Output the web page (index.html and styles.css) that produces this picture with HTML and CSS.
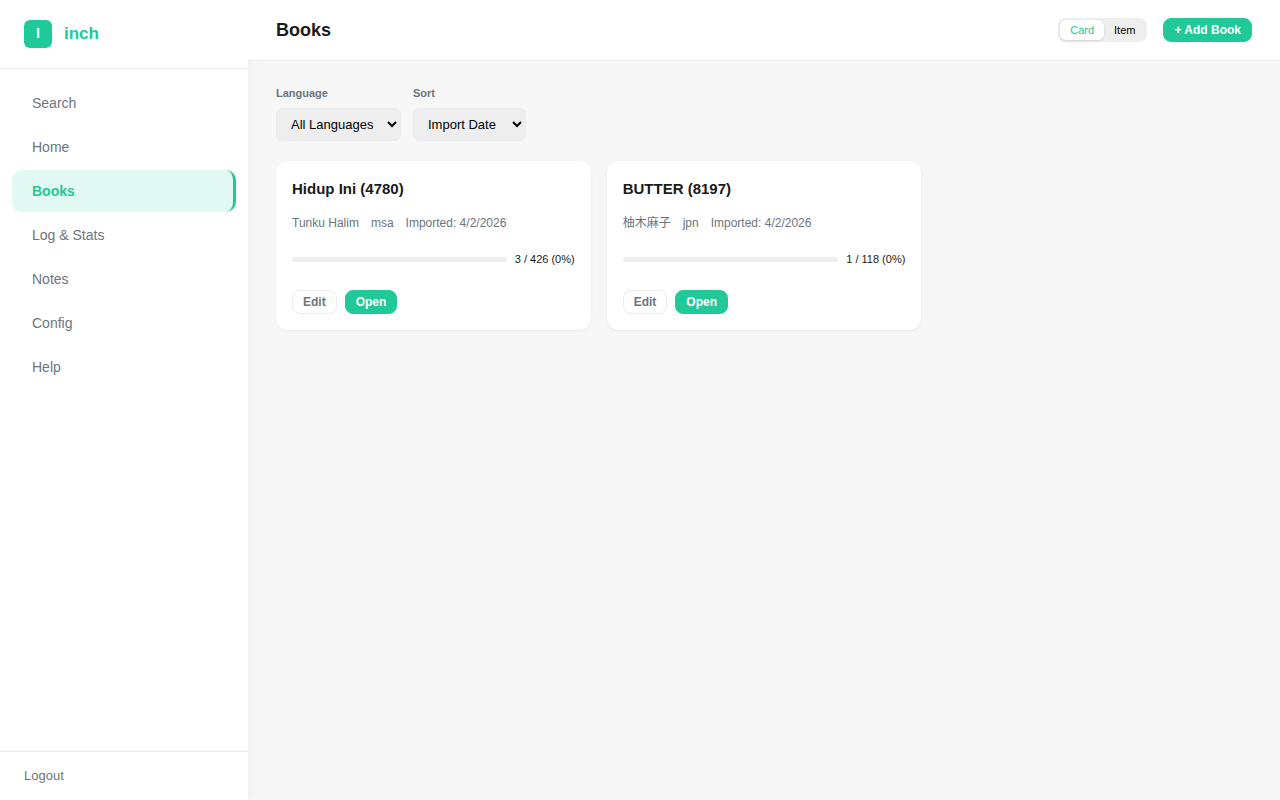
FILE: index.html
```html
<!DOCTYPE html>
<html lang="en">
<head>
    <meta charset="UTF-8">
    <meta name="viewport" content="width=device-width, initial-scale=1.0">
    <title>Books - inch</title>
    <link rel="stylesheet" href="styles.css">
</head>
<body>
    <aside class="sidebar">
        <div class="brand">
            <span class="brand-icon">I</span>
            <span class="brand-name">inch</span>
        </div>
        <nav class="nav">
            <a href="#search" class="nav-item">Search</a>
            <a href="#home" class="nav-item">Home</a>
            <a href="#books" class="nav-item active">Books</a>
            <a href="#stats" class="nav-item">Log &amp; Stats</a>
            <a href="#notes" class="nav-item">Notes</a>
            <a href="#config" class="nav-item">Config</a>
            <a href="#help" class="nav-item">Help</a>
        </nav>
        <div class="sidebar-footer">
            <a href="#logout" class="logout">Logout</a>
        </div>
    </aside>

    <main class="main">
        <header class="topbar">
            <h1>Books</h1>
            <div class="topbar-actions">
                <div class="toggle">
                    <button type="button" class="toggle-btn active">Card</button>
                    <button type="button" class="toggle-btn">Item</button>
                </div>
                <button type="button" class="btn btn-primary">+ Add Book</button>
            </div>
        </header>

        <div class="content">
            <div class="filters">
                <div class="filter">
                    <label for="language">Language</label>
                    <select id="language">
                        <option>All Languages</option>
                    </select>
                </div>
                <div class="filter">
                    <label for="sort">Sort</label>
                    <select id="sort">
                        <option>Import Date</option>
                    </select>
                </div>
            </div>

            <div class="book-grid">
                <article class="card">
                    <h2>Hidup Ini (4780)</h2>
                    <div class="meta">
                        <span>Tunku Halim</span>
                        <span>msa</span>
                        <span>Imported: 4/2/2026</span>
                    </div>
                    <div class="progress-row">
                        <progress value="0" max="100" aria-labelledby="progress-4780"></progress>
                        <span id="progress-4780">3 / 426 (0%)</span>
                    </div>
                    <div class="card-actions">
                        <button type="button" class="btn btn-outline">Edit</button>
                        <button type="button" class="btn btn-primary">Open</button>
                    </div>
                </article>

                <article class="card">
                    <h2>BUTTER (8197)</h2>
                    <div class="meta">
                        <span lang="ja">柚木麻子</span>
                        <span>jpn</span>
                        <span>Imported: 4/2/2026</span>
                    </div>
                    <div class="progress-row">
                        <progress value="0" max="100" aria-labelledby="progress-8197"></progress>
                        <span id="progress-8197">1 / 118 (0%)</span>
                    </div>
                    <div class="card-actions">
                        <button type="button" class="btn btn-outline">Edit</button>
                        <button type="button" class="btn btn-primary">Open</button>
                    </div>
                </article>
            </div>
        </div>
    </main>
</body>
</html>
```
FILE: styles.css
```css
* {
    box-sizing: border-box;
}
body {
    margin: 0;
    min-height: 100vh;
    display: flex;
    font-family: "Liberation Sans", "Noto Sans CJK JP", sans-serif;
    font-size: 14px;
    color: #1a1a1a;
    background-color: #f7f7f7;
}
h1, h2 {
    margin: 0;
    font-weight: bold;
}
a {
    text-decoration: none;
}
button, select {
    font-family: inherit;
    cursor: pointer;
}

/* Sidebar */
.sidebar {
    width: 248px;
    flex-shrink: 0;
    display: flex;
    flex-direction: column;
    background-color: #fff;
    box-shadow: 2px 0 12px rgba(0, 0, 0, 0.04);
}
.brand {
    display: flex;
    align-items: center;
    gap: 12px;
    padding: 20px 24px;
    border-bottom: 1px solid #e9ecef;
}
.brand-icon {
    width: 28px;
    height: 28px;
    line-height: 26px;
    border-radius: 6px;
    background-color: #20c997;
    color: #fff;
    font-size: 14px;
    font-weight: bold;
    text-align: center;
}
.brand-name {
    color: #20c997;
    font-size: 17px;
    font-weight: bold;
}
.nav {
    flex: 1;
    display: flex;
    flex-direction: column;
    padding: 12px;
}
.nav-item {
    margin: 1px 0;
    padding: 10px 20px;
    border-radius: 10px;
    line-height: 22px;
    color: #6c757d;
}
.nav-item:hover {
    background-color: #f7f7f7;
}
.nav-item.active {
    background-color: #e1f9f2;
    border-right: 3px solid #20c997;
    color: #20c997;
    font-weight: bold;
}
.sidebar-footer {
    padding: 14px 24px;
    border-top: 1px solid #e9ecef;
}
.logout {
    display: block;
    color: #6c757d;
    font-size: 13px;
    line-height: 20px;
}

/* Top bar */
.main {
    flex: 1;
    min-width: 0;
}
.topbar {
    display: flex;
    justify-content: space-between;
    align-items: center;
    padding: 16px 28px;
    border-bottom: 1px solid #e9ecef;
    background-color: #fff;
    position: relative;
}
.topbar h1 {
    font-size: 18px;
    line-height: 28px;
}
.topbar-actions {
    display: flex;
    align-items: center;
    gap: 16px;
}
.toggle {
    display: flex;
    padding: 2px;
    border-radius: 8px;
    background-color: #eee;
}
.toggle-btn {
    padding: 0 10px;
    border: none;
    border-radius: 6px;
    background: none;
    color: #000;
    font-size: 11px;
    line-height: 20px;
}
.toggle-btn.active {
    background-color: #fff;
    color: #20c997;
    box-shadow: 0 1px 3px rgba(0, 0, 0, 0.12);
}

/* Buttons */
.btn {
    padding: 0 10px;
    border: 1px solid transparent;
    border-radius: 8px;
    font-size: 12px;
    font-weight: bold;
    line-height: 22px;
}
.btn-primary {
    background-color: #20c997;
    border-color: #20c997;
    color: #fff;
}
.btn-outline {
    background-color: #fff;
    border-color: #e9ecef;
    color: #6c757d;
}

/* Filters */
.content {
    padding: 24px 28px;
}
.filters {
    display: flex;
    gap: 12px;
    margin-bottom: 20px;
}
.filter {
    display: flex;
    flex-direction: column;
    gap: 6px;
}
.filter label {
    color: #6c757d;
    font-size: 11px;
    font-weight: bold;
    line-height: 17px;
}
.filter select {
    min-width: 113px;
    padding: 7px 10px;
    border: 1px solid #e9ecef;
    border-radius: 6px;
    background-color: #eee;
    color: #000;
    font-size: 13px;
}

/* Book cards */
.book-grid {
    display: grid;
    grid-template-columns: repeat(auto-fill, minmax(280px, 1fr));
    gap: 16px;
}
.card {
    padding: 16px;
    border-radius: 12px;
    background-color: #fff;
    box-shadow: 0 1px 3px rgba(0, 0, 0, 0.06);
}
.card h2 {
    margin-bottom: 12px;
    font-size: 15px;
    line-height: 24px;
}
.meta {
    display: flex;
    gap: 12px;
    margin-bottom: 16px;
    color: #6c757d;
    font-size: 12px;
    line-height: 20px;
}
.progress-row {
    display: flex;
    align-items: center;
    gap: 8px;
    margin-bottom: 20px;
    font-size: 11px;
    line-height: 21px;
}
progress {
    flex: 1;
    min-width: 0;
    height: 5px;
    border: none;
    border-radius: 3px;
    overflow: hidden;
    background-color: #eee;
    appearance: none;
}
progress::-webkit-progress-bar {
    background-color: #eee;
}
progress::-webkit-progress-value {
    background-color: #20c997;
}
.card-actions {
    display: flex;
    gap: 8px;
}
```
